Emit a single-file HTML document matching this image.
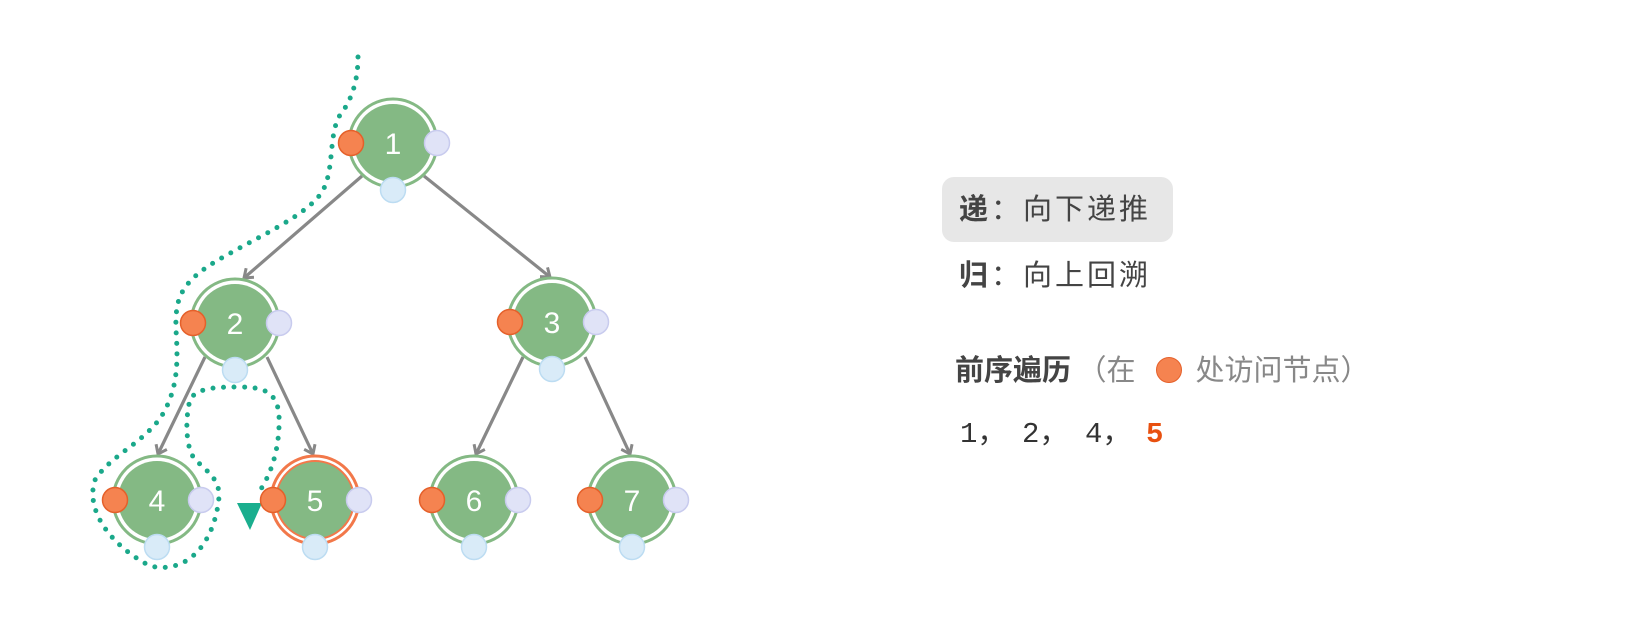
<!DOCTYPE html>
<html><head><meta charset="utf-8"><style>
html,body{margin:0;padding:0;background:#fff;}
body{width:1644px;height:629px;position:relative;overflow:hidden;font-family:"Noto Sans CJK SC","Liberation Sans",sans-serif;}
.t{position:absolute;font-size:29px;color:#444;white-space:nowrap;line-height:1;font-family:"Noto Sans CJK SC",sans-serif;}
.dot{display:inline-block;width:26px;height:26px;border-radius:50%;background:#f58350;border:1px solid #e5602a;box-sizing:border-box;vertical-align:-3px;margin:0 14px 0 20px;}
</style></head><body>
<svg width="1644" height="629" style="position:absolute;left:0;top:0">
<defs>
<marker id="ar" markerWidth="14" markerHeight="14" refX="10" refY="7" orient="auto" markerUnits="userSpaceOnUse">
<path d="M2,1 L10,7 L2,13" fill="none" stroke="#888" stroke-width="3"/>
</marker>
</defs>
<g stroke="#888" stroke-width="3.2" fill="none">
<line x1="362" y1="176" x2="244" y2="278" marker-end="url(#ar)"/>
<line x1="424" y1="176" x2="550" y2="277" marker-end="url(#ar)"/>
<line x1="205" y1="357" x2="158" y2="454" marker-end="url(#ar)"/>
<line x1="267" y1="357" x2="313" y2="454" marker-end="url(#ar)"/>
<line x1="523" y1="357" x2="476" y2="454" marker-end="url(#ar)"/>
<line x1="585" y1="357" x2="630" y2="454" marker-end="url(#ar)"/>
</g>
<path d="M358,57 C358,80 352,100 340,115 C328,135 335,170 322,192 C305,218 250,240 210,265 C180,285 175,300 176,330 C178,360 178,385 165,410 C150,440 110,455 95,480 C85,510 110,545 150,566 C190,575 215,540 219,497 C220,475 200,468 192,455 C185,440 186,415 190,400 C196,388 215,387 240,387 C265,387 277,393 279,415 C280,440 275,470 257,495" fill="none" stroke="#1aa88a" stroke-width="5" stroke-linecap="round" stroke-dasharray="0 10.5"/>
<polygon points="237,503 262,503 250,530" fill="#1aae8e"/>
<g>
<g transform="translate(393,143)"><circle r="44" fill="#fff" stroke="#84b984" stroke-width="3"/><circle r="39" fill="#84b984"/><text y="11" font-size="30" fill="#fff" text-anchor="middle" font-family="Liberation Sans">1</text><circle cx="-42" r="12.5" fill="#f58350" stroke="#e5602a" stroke-width="1.5"/><circle cx="44" r="12.5" fill="#e0e3f7" stroke="#c8cbee" stroke-width="1.5"/><circle cy="47" r="12.5" fill="#d9ebf8" stroke="#bcdcf2" stroke-width="1.5"/></g>
<g transform="translate(235,323)"><circle r="44" fill="#fff" stroke="#84b984" stroke-width="3"/><circle r="39" fill="#84b984"/><text y="11" font-size="30" fill="#fff" text-anchor="middle" font-family="Liberation Sans">2</text><circle cx="-42" r="12.5" fill="#f58350" stroke="#e5602a" stroke-width="1.5"/><circle cx="44" r="12.5" fill="#e0e3f7" stroke="#c8cbee" stroke-width="1.5"/><circle cy="47" r="12.5" fill="#d9ebf8" stroke="#bcdcf2" stroke-width="1.5"/></g>
<g transform="translate(552,322)"><circle r="44" fill="#fff" stroke="#84b984" stroke-width="3"/><circle r="39" fill="#84b984"/><text y="11" font-size="30" fill="#fff" text-anchor="middle" font-family="Liberation Sans">3</text><circle cx="-42" r="12.5" fill="#f58350" stroke="#e5602a" stroke-width="1.5"/><circle cx="44" r="12.5" fill="#e0e3f7" stroke="#c8cbee" stroke-width="1.5"/><circle cy="47" r="12.5" fill="#d9ebf8" stroke="#bcdcf2" stroke-width="1.5"/></g>
<g transform="translate(157,500)"><circle r="44" fill="#fff" stroke="#84b984" stroke-width="3"/><circle r="39" fill="#84b984"/><text y="11" font-size="30" fill="#fff" text-anchor="middle" font-family="Liberation Sans">4</text><circle cx="-42" r="12.5" fill="#f58350" stroke="#e5602a" stroke-width="1.5"/><circle cx="44" r="12.5" fill="#e0e3f7" stroke="#c8cbee" stroke-width="1.5"/><circle cy="47" r="12.5" fill="#d9ebf8" stroke="#bcdcf2" stroke-width="1.5"/></g>
<g transform="translate(315,500)"><circle r="44" fill="#fff" stroke="#f2784a" stroke-width="3"/><circle r="39" fill="#84b984" stroke="#f2784a" stroke-width="2"/><text y="11" font-size="30" fill="#fff" text-anchor="middle" font-family="Liberation Sans">5</text><circle cx="-42" r="12.5" fill="#f58350" stroke="#e5602a" stroke-width="1.5"/><circle cx="44" r="12.5" fill="#e0e3f7" stroke="#c8cbee" stroke-width="1.5"/><circle cy="47" r="12.5" fill="#d9ebf8" stroke="#bcdcf2" stroke-width="1.5"/></g>
<g transform="translate(474,500)"><circle r="44" fill="#fff" stroke="#84b984" stroke-width="3"/><circle r="39" fill="#84b984"/><text y="11" font-size="30" fill="#fff" text-anchor="middle" font-family="Liberation Sans">6</text><circle cx="-42" r="12.5" fill="#f58350" stroke="#e5602a" stroke-width="1.5"/><circle cx="44" r="12.5" fill="#e0e3f7" stroke="#c8cbee" stroke-width="1.5"/><circle cy="47" r="12.5" fill="#d9ebf8" stroke="#bcdcf2" stroke-width="1.5"/></g>
<g transform="translate(632,500)"><circle r="44" fill="#fff" stroke="#84b984" stroke-width="3"/><circle r="39" fill="#84b984"/><text y="11" font-size="30" fill="#fff" text-anchor="middle" font-family="Liberation Sans">7</text><circle cx="-42" r="12.5" fill="#f58350" stroke="#e5602a" stroke-width="1.5"/><circle cx="44" r="12.5" fill="#e0e3f7" stroke="#c8cbee" stroke-width="1.5"/><circle cy="47" r="12.5" fill="#d9ebf8" stroke="#bcdcf2" stroke-width="1.5"/></g>
</g>
<rect x="942" y="177" width="231" height="65" rx="12" fill="#e7e7e7"/>
</svg>
<div class="t" style="left:959px;top:193px;letter-spacing:3px"><b>递</b>：向下递推</div>
<div class="t" style="left:959px;top:259px;letter-spacing:3px"><b>归</b>：向上回溯</div>
<div class="t" style="left:955px;top:354px"><b>前序遍历</b> <span style="color:#888">（在<span class="dot"></span>处访问节点）</span></div>
<div class="t" style="left:960px;top:420px;font-family:'Liberation Mono','Noto Sans CJK SC',monospace;color:#333">1，</div>
<div class="t" style="left:1022px;top:420px;font-family:'Liberation Mono','Noto Sans CJK SC',monospace;color:#333">2，</div>
<div class="t" style="left:1085px;top:420px;font-family:'Liberation Mono','Noto Sans CJK SC',monospace;color:#333">4，</div>
<div class="t" style="left:1146px;top:420px;font-family:'Liberation Mono',monospace;color:#e8500f;font-weight:bold">5</div>
</body></html>
